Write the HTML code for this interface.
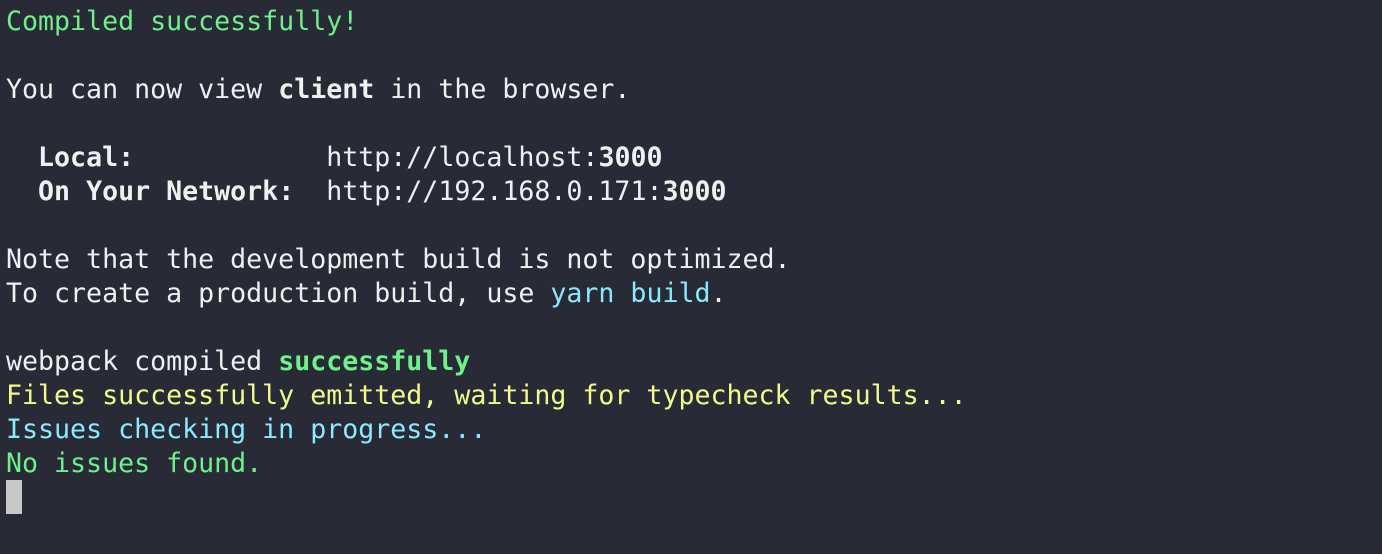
<!DOCTYPE html>
<html><head><meta charset="utf-8"><style>
html,body{margin:0;padding:0;background:#282a36;width:1382px;height:554px;overflow:hidden}
pre{margin:0;position:absolute;left:6px;top:5px;font-family:"DejaVu Sans Mono","Liberation Mono",monospace;font-size:26.6px;line-height:34px;color:#f0f0f0}
b{font-weight:bold}
.g{color:#6ef08a}.y{color:#f1fa8c}.c{color:#8be9fd}
.cur{display:inline-block;width:16px;height:34px;background:#c8c8c8;vertical-align:top;margin-top:-1px}
</style></head><body>
<pre><span class="g">Compiled successfully!</span>

You can now view <b>client</b> in the browser.

  <b>Local:</b>            http://localhost:<b>3000</b>
  <b>On Your Network:</b>  http://192.168.0.171:<b>3000</b>

Note that the development build is not optimized.
To create a production build, use <span class="c">yarn build</span>.

webpack compiled <b class="g">successfully</b>
<span class="y">Files successfully emitted, waiting for typecheck results...</span>
<span class="c">Issues checking in progress...</span>
<span class="g">No issues found.</span>
<span class="cur"></span></pre>
</body></html>
